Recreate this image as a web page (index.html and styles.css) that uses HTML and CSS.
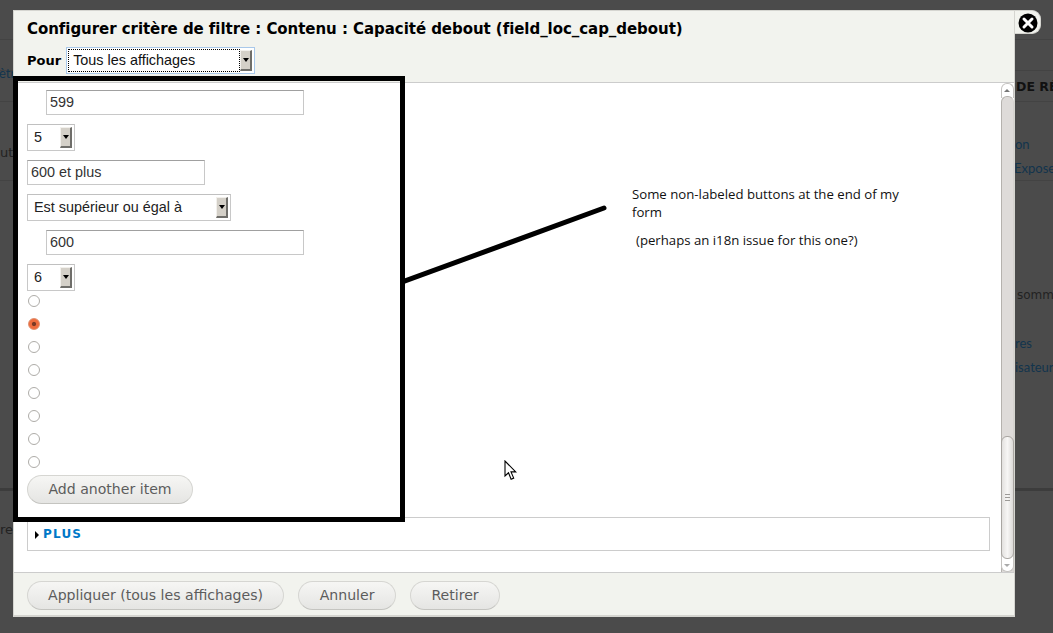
FILE: index.html
```html
<!DOCTYPE html>
<html lang="fr">
<head>
<meta charset="utf-8">
<title>Configurer critère de filtre</title>
<link rel="stylesheet" href="styles.css">
</head>
<body>
<div class="backdrop">
  <span class="bg-rule r1"></span><span class="bg-rule r2"></span><span class="bg-rule r3"></span><span class="bg-rule r4"></span>
  <span class="bg-rule thick"></span>
  <span class="bg-text link t1">ètr</span>
  <span class="bg-text t2">ut</span>
  <span class="bg-text t3">re</span>
  <span class="bg-text strong t4">DE RÉ</span>
  <span class="bg-text link t5">on</span>
  <span class="bg-text link t6">Expose</span>
  <span class="bg-text t7">somm</span>
  <span class="bg-text link t8">res</span>
  <span class="bg-text link t9">isateur</span>
</div>

<div class="dialog">
  <header class="dialog-head">
    <h1 class="dialog-title">Configurer critère de filtre : Contenu : Capacité debout (field_loc_cap_debout)</h1>
    <div class="for-row">
      <span class="for-label">Pour</span>
      <div class="focus-ring"><div class="select select-for"><span class="select-value dotted">Tous les affichages</span><span class="select-btn"></span></div></div>
    </div>
  </header>
  <div class="dialog-body">
    <div class="scroll-content">
      <input class="text indented" type="text" value="599">
      <div class="select select-small"><span class="select-value">5</span><span class="select-btn"></span></div>
      <input class="text short" type="text" value="600 et plus">
      <div class="select select-op"><span class="select-value">Est supérieur ou égal à</span><span class="select-btn"></span></div>
      <input class="text indented" type="text" value="600">
      <div class="select select-small last"><span class="select-value">6</span><span class="select-btn"></span></div>
      <div class="radios">
        <input class="radio" type="radio" name="r">
        <input class="radio" type="radio" name="r" checked>
        <input class="radio" type="radio" name="r">
        <input class="radio" type="radio" name="r">
        <input class="radio" type="radio" name="r">
        <input class="radio" type="radio" name="r">
        <input class="radio" type="radio" name="r">
        <input class="radio" type="radio" name="r">
      </div>
      <button class="btn add" type="button">Add another item</button>
      <div class="fieldset"><span class="tri"></span><a class="more" href="#">PLUS</a></div>
    </div>
    <div class="scrollbar">
      <span class="sb-cap top"><i class="up"></i></span>
      <span class="sb-cap bottom"><i class="down"></i></span>
      <span class="sb-track"></span>
      <span class="sb-thumb"><i></i><i></i><i></i></span>
    </div>
  </div>
  <footer class="dialog-foot">
    <button class="btn" type="button">Appliquer (tous les affichages)</button>
    <button class="btn btn-cancel" type="button">Annuler</button>
    <button class="btn btn-remove" type="button">Retirer</button>
  </footer>
</div>

<div class="close-tab">
  <svg class="close-icon" width="20" height="20" viewBox="0 0 20 20"><circle cx="10" cy="10" r="9.5" fill="#000"/><path d="M6 6l8 8M14 6l-8 8" stroke="#fff" stroke-width="3" stroke-linecap="round"/></svg>
</div>

<div class="frame"></div>
<svg class="callout" width="210" height="80" viewBox="0 0 210 80"><path d="M0 77 L199 4" stroke="#000" stroke-width="5" stroke-linecap="round" fill="none"/></svg>
<div class="note">
  <p>Some non-labeled buttons at the end of my form</p>
  <p class="note-2">(perhaps an i18n issue for this one?)</p>
</div>
<svg class="cursor" width="14" height="21" viewBox="0 0 14 21"><path d="M1 1v15l3.5-3.2 2.6 6.4 2.6-1.1-2.7-6.2h4.7z" fill="#fff" stroke="#000" stroke-width="1.1"/></svg>
</body>
</html>
```
FILE: styles.css
```css
* { box-sizing: border-box; }
html, body { margin: 0; height: 100%; }
body { position: relative; width: 1053px; height: 633px; overflow: hidden; background: #4b4b4b; font-family: "DejaVu Sans", sans-serif; }

.backdrop { position: absolute; inset: 0; }
.bg-rule { position: absolute; left: 0; right: 0; height: 1px; background: #434343; }
.r1 { top: 39px; } .r2 { top: 70px; } .r3 { top: 101px; } .r4 { top: 180px; }
.bg-rule.thick { top: 488px; height: 3px; background: #3c3c3c; }
.bg-text { position: absolute; font: 13px/16px "DejaVu Sans", sans-serif; color: #222; white-space: nowrap; }
.bg-text.link { color: #12344d; font-family: "Lato", sans-serif; font-size: 13px; }
.bg-text.strong { font-weight: 700; color: #111; font-size: 12.5px; }
.t1 { left: -1px; top: 65px; }
.t2 { left: 0; top: 145px; }
.t3 { left: 0; top: 522px; }
.t4 { left: 1016px; top: 79px; }
.t5 { left: 1015px; top: 136px; }
.t6 { left: 1014px; top: 160px; font-size: 12.5px; }
.t7 { left: 1017px; top: 287px; font-size: 12px; }
.t8 { left: 1015px; top: 335px; }
.t9 { left: 1015px; top: 359px; font-size: 12.5px; }

.dialog { position: absolute; left: 13px; top: 10px; width: 1002px; height: 607px; display: flex; flex-direction: column; background: #f2f3ee; border: 1px solid #d5d5d0; border-bottom-width: 2px; }
.dialog-head { flex: none; height: 72px; padding: 8px 13px 0; border-bottom: 1px solid #ccc; }
.dialog-title { margin: 0; font-size: 15px; line-height: 20px; font-weight: 700; letter-spacing: -0.05px; color: #000; white-space: nowrap; }
.for-row { display: flex; align-items: center; margin-top: 8px; }
.for-label { font-size: 13px; font-weight: 700; color: #000; margin-right: 5px; }
.focus-ring { border: 1px solid #a9c8ea; padding: 2px; background: #fff; height: 27px; width: 189px; }
.select { display: flex; align-items: center; background: #fff; font: 14.4px "Liberation Sans", sans-serif; color: #222; }
.select-for { height: 21px; color: #111; }
.select-value { flex: 1; white-space: nowrap; padding-bottom: 2px; }
.select-value.dotted { outline: 1px dotted #000; height: 21px; line-height: 20px; padding: 0 0 0 4px; margin-right: 1px; }
.select-btn { position: relative; flex: none; width: 12px; height: 21px; background: #d4d0c8; border-style: solid; border-width: 1px 2px 2px 1px; border-color: #f2f0ec #6f6e6a #6f6e6a #f2f0ec; }
.select-btn::after { content: ""; position: absolute; left: 2px; top: 7px; border: 3px solid transparent; border-top: 4px solid #000; border-bottom: 0; }

.dialog-body { flex: 1; min-height: 0; display: flex; background: #fff; border-bottom: 1px solid #ccc; }
.scroll-content { flex: 1; padding: 7px 0 0 13px; display: flex; flex-direction: column; align-items: flex-start; }
.text { display: block; height: 25px; padding: 0 3px 2px; border: 1px solid #c8c8c8; border-top-color: #a0a0a0; font: 14.4px "Liberation Sans", sans-serif; color: #333; background: #fff; outline: 0; }
.text.indented { width: 258px; margin-left: 19px; }
.text.short { width: 178px; margin-top: 9px; }
.select-small, .select-op { height: 27px; border: 1px solid #c8c8c8; border-top-color: #c0c0c0; padding: 2px 2px 2px 6px; }
.select-small { width: 48px; margin-top: 9px; }
.select-op { width: 204px; margin-top: 9px; margin-bottom: 9px; }

.radios { display: flex; flex-direction: column; gap: 11px; margin-top: 4px; }
.radio { appearance: none; display: block; margin: 0 0 0 1px; width: 12px; height: 12px; border-radius: 50%; background: #fff; border: 1px solid #aeaca8; }
.radio:checked { border-color: #e0906f; background: radial-gradient(circle, #7b3a26 0, #7b3a26 1.6px, #ee6c3e 2.6px, #ee6c3e 100%); }

.btn { height: 29px; padding: 0 20px 1px; border: 1px solid #d6d6d2; border-bottom-color: #c4c4c0; border-radius: 15px; background: linear-gradient(#f6f6f4, #e5e5e3); font: 14.1px "DejaVu Sans", sans-serif; color: #5c5c5c; white-space: nowrap; }
.btn.add { margin-top: 7px; width: 166px; padding: 0 0 1px; }
.btn.btn-cancel { width: 98px; padding: 0 0 1px; }
.btn.btn-remove { width: 90px; padding: 0 0 1px; }

.fieldset { margin-top: 13px; width: 963px; height: 34px; border: 1px solid #ccc; padding: 0 7px; display: flex; align-items: center; }
.tri { width: 0; height: 0; border: 4px solid transparent; border-left-color: #000; border-right: 0; margin-right: 4px; margin-top: 1px; }
.more { font-size: 12px; font-weight: 700; letter-spacing: 1.2px; color: #0078c8; text-decoration: none; }

.scrollbar { position: relative; flex: none; width: 13px; }
.sb-track { position: absolute; left: 0; right: 0; top: 13px; bottom: 0; background: #dedbd9; border: 1px solid #b5b2ae; border-right-color: #d6d3d0; border-bottom: 0; border-radius: 6px 6px 0 0; }
.sb-cap { position: absolute; left: 0; width: 13px; background: #fff; border: 1px solid #c5c3c0; }
.sb-cap.top { top: 0; height: 15px; border-radius: 6px 6px 0 0; border-bottom: 0; }
.sb-cap.bottom { bottom: 0; height: 20px; z-index: 1; border-radius: 0 0 6px 6px; border-top: 0; }
.sb-cap i { position: absolute; left: 2px; border: 3px solid transparent; }
.sb-cap .up { top: 5px; border-bottom: 3px solid #777; border-top: 0; }
.sb-cap .down { bottom: 4px; border-top: 3px solid #aaa; border-bottom: 0; }
.sb-thumb { position: absolute; z-index: 2; left: 0; width: 13px; top: 353px; height: 123px; border: 1px solid #a9a6a2; border-radius: 6px; background: linear-gradient(90deg, #e3e1df, #f7f6f5 50%, #dcdad8); display: flex; flex-direction: column; align-items: center; justify-content: center; gap: 2px; }
.sb-thumb i { display: block; width: 5px; height: 1px; background: #9c9a97; }

.dialog-foot { flex: none; height: 42px; padding: 8px 13px 0; display: flex; align-items: flex-start; gap: 14px; }

.close-tab { position: absolute; left: 1015px; top: 10px; width: 26px; height: 24px; background: #f2f3ee; border: 1px solid #d5d5d0; border-left: 0; border-radius: 0 9px 9px 0; }
.close-icon { position: absolute; left: 3px; top: 2px; }

.frame { position: absolute; left: 13px; top: 76px; width: 392px; height: 446px; border: 5px solid #000; pointer-events: none; }
.callout { position: absolute; left: 405px; top: 204px; }
.note { position: absolute; left: 632px; top: 185px; width: 280px; font: 13.2px/18px "Open Sans", sans-serif; color: #111; }
.note p { margin: 0; }
.note .note-2 { margin: 10px 0 0 4px; }
.cursor { position: absolute; left: 504px; top: 460px; }
```
